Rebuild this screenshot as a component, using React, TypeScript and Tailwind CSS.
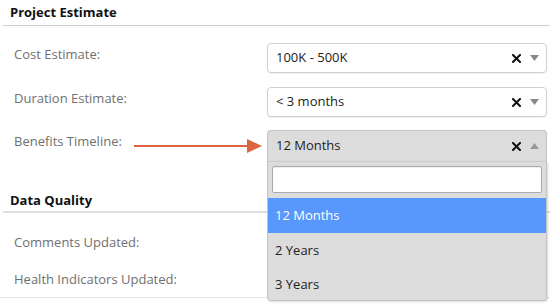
import React from "react";

function Arrow({ up }: { up?: boolean }) {
  return (
    <svg width="9" height="6" viewBox="0 0 9 6" className="shrink-0">
      {up ? (
        <polygon points="0,6 9,6 4.5,0" fill="#999" />
      ) : (
        <polygon points="0,0 9,0 4.5,6" fill="#888" />
      )}
    </svg>
  );
}

function Clear() {
  return (
    <svg width="9" height="9" viewBox="0 0 9 9" className="shrink-0 mr-[9px]">
      <path d="M1 1 L8 8 M8 1 L1 8" stroke="#111" strokeWidth="2" strokeLinecap="square" />
    </svg>
  );
}

function Select({ value, open }: { value: string; open?: boolean }) {
  return (
    <div
      className={
        "w-[280px] flex items-center pl-[8px] pr-[7px] text-[13px] text-[#222] " +
        (open
          ? "h-[31px] bg-[#dcdcdc] border border-[#c4c4c4] border-b-0 rounded-t-[4px]"
          : "h-[30px] bg-white border border-[#d0d0d0] rounded-[4px] shadow-[0_1px_1px_rgba(0,0,0,0.06)]")
      }
    >
      <span className="flex-1">{value}</span>
      <Clear />
      <Arrow up={open} />
    </div>
  );
}

function Row({
  label,
  children,
  className,
}: {
  label: string;
  children?: React.ReactNode;
  className?: string;
}) {
  return (
    <div className={"flex items-start " + (className ?? "")}>
      <div className="w-[267px] pl-[14px] pt-[2px] leading-[18px] text-[13px] text-[#707070]">
        {label}
      </div>
      {children}
    </div>
  );
}

export default function App() {
  return (
    <div className="relative w-[550px] h-[306px] overflow-hidden bg-white font-['Open_Sans',sans-serif]">
      <div className="ml-[3px] border-b border-[#cfcfcf] pl-[7px] pt-[3px] h-[26px] text-[13px] font-bold leading-[18px] text-[#111]">
        Project Estimate
      </div>

      <Row label="Cost Estimate:" className="mt-[17px]">
        <Select value="100K - 500K" />
      </Row>
      <Row label="Duration Estimate:" className="mt-[14px]">
        <Select value="< 3 months" />
      </Row>
      <div className="relative pt-[13px]">
        <Row label="Benefits Timeline:">
          <Select value="12 Months" open />
        </Row>
        <svg
          width="130"
          height="16"
          viewBox="0 0 130 16"
          className="absolute left-[134px] top-[21px]"
        >
          <line x1="0" y1="8" x2="114" y2="8" stroke="#dd6440" strokeWidth="2" />
          <polygon points="113,1 128,8 113,15" fill="#dd6440" />
        </svg>
      </div>

      <div className="mt-[30px] ml-[3px] border-b-2 border-[#dedede] pl-[7px] h-[22px] text-[13px] font-bold leading-[18px] text-[#111]">
        Data Quality
      </div>
      <div className="mt-[20px] pl-[14px] leading-[18px] text-[13px] text-[#707070]">
        Comments Updated:
      </div>
      <div className="mt-[19px] pl-[14px] leading-[18px] text-[13px] text-[#707070] border-b border-[#e6e6e6] pb-[9px]">
        Health Indicators Updated:
      </div>

      <div className="absolute left-[267px] top-[161px] w-[280px] h-[140px] bg-[#dcdcdc] border border-t-0 border-[#c4c4c4] rounded-b-[4px] shadow-[1px_1px_2px_rgba(0,0,0,0.15)]">
        <div className="border-t border-[#cacaca] pt-[4px] px-[4px]">
          <div className="h-[27px] bg-white border border-[#aaa] rounded-[2px] shadow-[inset_0_1px_1px_rgba(0,0,0,0.08)]" />
        </div>
        <div className="mt-[5px] text-[13px]">
          <div className="h-[35px] flex items-center pl-[7px] bg-[#5897fb] text-white">12 Months</div>
          <div className="h-[35px] flex items-center pl-[7px] text-[#222]">2 Years</div>
          <div className="h-[34px] flex items-center pl-[7px] text-[#222]">3 Years</div>
        </div>
      </div>
    </div>
  );
}
